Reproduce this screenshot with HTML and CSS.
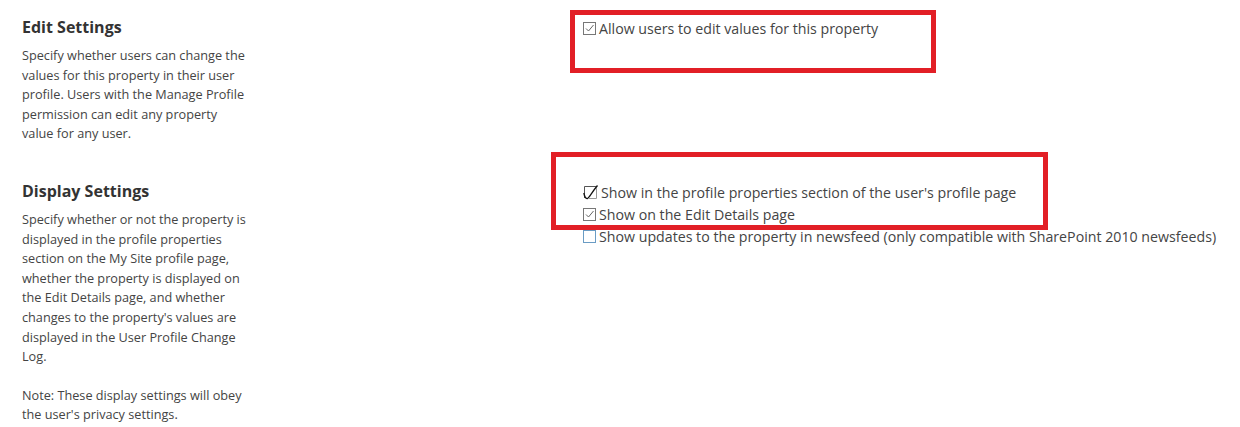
FILE: index.html
```html
<!DOCTYPE html>
<html lang="en">
<head>
    <meta charset="UTF-8">
    <title>Edit User Profile Property</title>
    <link rel="stylesheet" href="styles.css">
</head>
<body>
    <div class="page">
        <!-- Edit settings -->
        <div class="section edit-section">
            <div class="section-info">
                <h3>Edit Settings</h3>
                <p>Specify whether users can change the values for this property in their user profile. Users with the Manage Profile permission can edit any property value for any user.</p>
            </div>
            <div class="section-fields">
                <div class="mark mark-edit"></div>
                <label class="field">
                    <svg class="check" width="13" height="13" viewBox="0 0 13 13">
                        <rect x="0.5" y="0.5" width="12" height="12" fill="#fff" stroke="#777"/>
                        <path d="M3 6.5 L5.5 9 L10.5 3" fill="none" stroke="#666" stroke-width="1"/>
                    </svg>
                    <span>Allow users to edit values for this property</span>
                </label>
            </div>
        </div>

        <!-- Display settings -->
        <div class="section display-section">
            <div class="section-info">
                <h3>Display Settings</h3>
                <p>Specify whether or not the property is displayed in the profile properties section on the My Site profile page, whether the property is displayed on the Edit Details page, and whether changes to the property's values are displayed in the User Profile Change Log.</p>
                <p>Note: These display settings will obey the user's privacy settings.</p>
            </div>
            <div class="section-fields">
                <div class="mark mark-display"></div>
                <label class="field">
                    <svg class="check" width="15" height="15" viewBox="0 0 15 15">
                        <path d="M1.5 13 L1.5 1.5 L13.5 1.5" fill="none" stroke="#555"/>
                        <path d="M0.8 8 C1.5 11 2.5 14 4.5 13.5 C6 13 9 7 14.5 0.5" fill="none" stroke="#111" stroke-width="1.3"/>
                        <path d="M13.5 3 L13.5 13.5 L5 13.5" fill="none" stroke="#999"/>
                    </svg>
                    <span>Show in the profile properties section of the user's profile page</span>
                </label>
                <label class="field">
                    <svg class="check" width="13" height="13" viewBox="0 0 13 13">
                        <rect x="0.5" y="0.5" width="12" height="12" fill="#fff" stroke="#777"/>
                        <path d="M3 6.5 L5.5 9 L10.5 3" fill="none" stroke="#666" stroke-width="1"/>
                    </svg>
                    <span>Show on the Edit Details page</span>
                </label>
                <label class="field">
                    <svg class="check" width="13" height="13" viewBox="0 0 13 13">
                        <rect x="0.5" y="0.5" width="12" height="12" fill="#fff" stroke="#6a9cc4"/>
                    </svg>
                    <span>Show updates to the property in newsfeed (only compatible with SharePoint 2010 newsfeeds)</span>
                </label>
            </div>
        </div>
    </div>
</body>
</html>
```

FILE: styles.css
```css
/* Page basics */
body {
    margin: 0;
    background-color: #fff;
    font-family: "Open Sans", "Noto Sans", sans-serif;
    color: #444;
}

.page {
    padding: 16px 0 0 22px;
}

/* Each settings row: description on the left, fields on the right */
.section {
    display: grid;
    grid-template-columns: 561px 1fr;
}

.edit-section {
    height: 164px;
}

.section-info h3 {
    margin: 0 0 8px 0;
    font-size: 16px;
    font-weight: bold;
    color: #333;
}

.section-info p {
    margin: 0 0 19px 0;
    width: 228px;
    font-size: 12.7px;
    line-height: 19.6px;
}

/* Field column */
.section-fields {
    position: relative;
    padding-top: 1px;
}

.field {
    display: flex;
    align-items: center;
    height: 22px;
    font-size: 14.2px;
    white-space: nowrap;
}

.check {
    flex: none;
    margin-right: 3px;
}

/* Red annotation boxes drawn over the fields */
.mark {
    position: absolute;
    border: 5px solid #e21f26;
}

.mark-edit {
    left: -13px;
    top: -6px;
    width: 356px;
    height: 53px;
}

.mark-display {
    left: -32px;
    top: -28px;
    width: 487px;
    height: 68px;
}
```
